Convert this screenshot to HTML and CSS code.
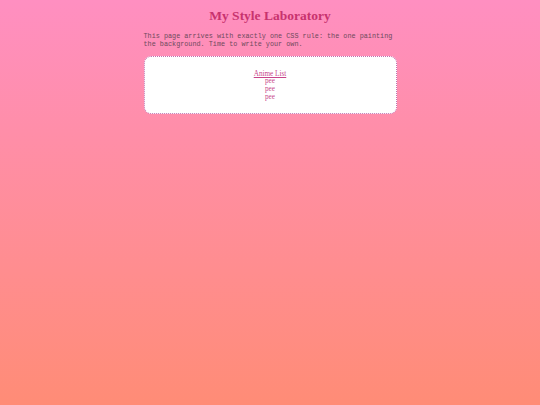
FILE: index.html
```html
<!DOCTYPE html>
<html>
<head>
<meta charset="utf-8">
<link rel="stylesheet" href="styles.css">
</head>
<body>
<main class="page">
  <h1 class="title">My Style Laboratory</h1>
  <p class="intro">This page arrives with exactly one CSS rule: the one painting the background. Time to write your own.</p>
  <section class="card">
    <a class="card-link" href="#">Anime List</a>
    <div class="card-item">pee</div>
    <div class="card-item">pee</div>
    <div class="card-item">pee</div>
  </section>
</main>
</body>
</html>
```

FILE: styles.css
```css
html, body {
  margin: 0;
  padding: 0;
}
body {
  min-height: 405px;
  background: linear-gradient(to bottom, #ff8fc1, #ff8c76);
}
.page {
  width: 253px;
  margin: 0 auto;
  padding-top: 8px;
}
.title {
  margin: 0;
  font-family: "Liberation Serif", serif;
  font-size: 13.5px;
  line-height: 16px;
  font-weight: bold;
  text-align: center;
  color: #c8336e;
}
.intro {
  margin: 9px 0 0 0;
  font-family: "Liberation Mono", monospace;
  font-size: 6.8px;
  line-height: 7.5px;
  color: #6e4a5c;
}
.card {
  margin-top: 8px;
  background: #ffffff;
  border: 1px dotted #c070b0;
  border-radius: 7px;
  padding: 13.5px 0 11px 0;
  display: flex;
  flex-direction: column;
  align-items: center;
  font-family: "Liberation Serif", serif;
  font-size: 7.2px;
  line-height: 7.8px;
  color: #c8478c;
}
.card-link {
  color: #c8448a;
  text-decoration: underline;
}
```
